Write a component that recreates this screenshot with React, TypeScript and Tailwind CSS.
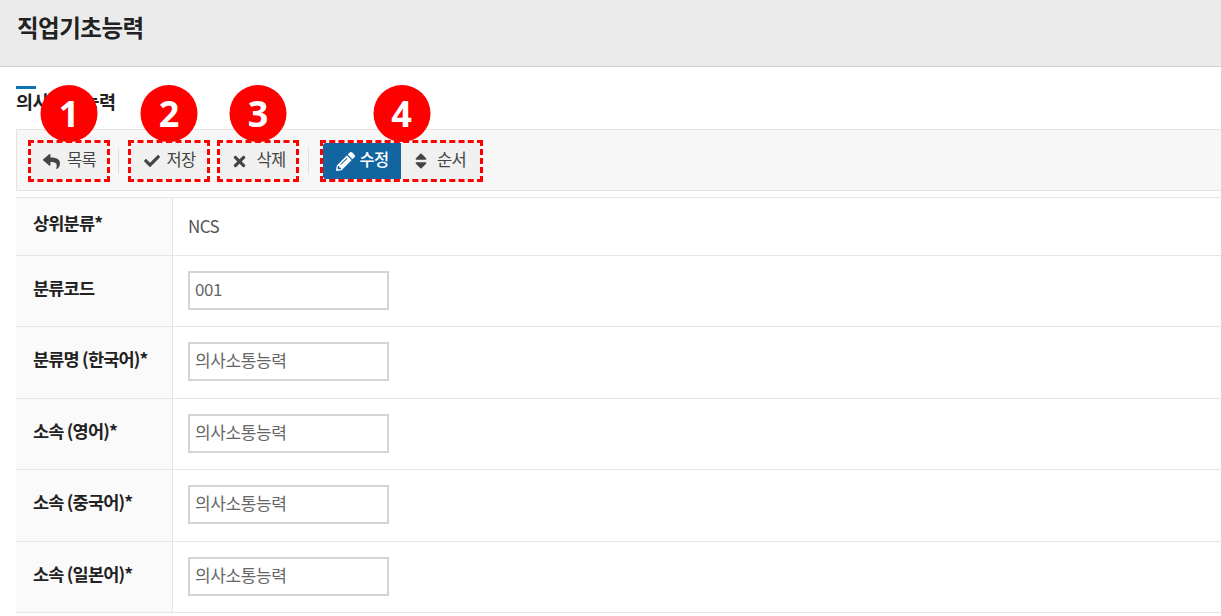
import { FaCheck, FaPencilAlt, FaReply, FaSort, FaTimes } from "react-icons/fa";
import type { ReactNode } from "react";

const rows = [
    { label: "상위분류*", text: "NCS", height: "h-[58px]" },
    { label: "분류코드", value: "001", height: "h-[71px]" },
    { label: "분류명 (한국어)*", value: "의사소통능력", height: "h-[72px]" },
    { label: "소속 (영어)*", value: "의사소통능력", height: "h-[71px]" },
    { label: "소속 (중국어)*", value: "의사소통능력", height: "h-[72px]" },
    { label: "소속 (일본어)*", value: "의사소통능력", height: "h-[71px]" },
];

function Badge({ n }: { n: number }) {
    return (
        <span className="absolute -top-[58px] left-1/2 flex h-[57px] w-[57px] -translate-x-1/2 items-center justify-center rounded-full bg-[#ff0000] font-['Open_Sans',sans-serif] text-[36px] font-bold leading-none text-white">
            {n}
        </span>
    );
}

function Marked({ n, children }: { n: number; children: ReactNode }) {
    return (
        <div className="relative flex border-[3px] border-dashed border-[#ff0000]">
            <Badge n={n} />
            {children}
        </div>
    );
}

function ToolButton({ icon, label, gap }: { icon: ReactNode; label: string; gap: string }) {
    return (
        <button className={`flex h-[36px] w-[76px] items-center justify-center rounded-[3px] bg-[#f0f0f0] pb-[3px] text-[16.5px] tracking-[-0.7px] text-[#444] ${gap}`}>
            {icon}
            {label}
        </button>
    );
}

export default function App() {
    return (
        <div className="h-[616px] w-[1221px] overflow-hidden bg-white font-['Noto_Sans_CJK_KR','Liberation_Sans',sans-serif] text-[#333]">
            <header className="flex h-[67px] items-center border-b border-[#cfcfcf] bg-[#ebebeb] pb-[11px] pl-[17px]">
                <h1 className="text-[23.5px] font-bold tracking-[-0.5px] text-[#222]">직업기초능력</h1>
            </header>

            <div className="pl-4">
                <div className="mt-[19px] h-[3px] w-5 bg-[#0f6fb5]" />
                <h2 className="h-[40px] text-[18.5px] font-bold leading-[24px] tracking-[-0.4px] text-[#222]">
                    의사소통능력
                </h2>

                <div className="flex h-[62px] items-center border-y border-l border-[#e4e4e4] bg-[#f7f7f7] pl-[11px] pt-[2px]">
                    <Marked n={1}>
                        <ToolButton gap="gap-[6px]" icon={<FaReply className="mt-[3px] h-[17px] w-[19px]" />} label="목록" />
                    </Marked>
                    <span className="ml-[8px] h-[26px] w-px bg-[#e0e0e0]" />
                    <div className="ml-[9px]">
                        <Marked n={2}>
                            <ToolButton gap="gap-[6px]" icon={<FaCheck className="mt-[3px] h-[16px] w-[18px]" />} label="저장" />
                        </Marked>
                    </div>
                    <div className="ml-[7px]">
                        <Marked n={3}>
                            <ToolButton gap="gap-[9px]" icon={<FaTimes className="mt-[3px] h-[17px] w-[17px]" />} label="삭제" />
                        </Marked>
                    </div>
                    <span className="ml-[9px] h-[26px] w-px bg-[#e0e0e0]" />
                    <div className="ml-[11px]">
                        <Marked n={4}>
                            <button className="flex h-[36px] w-[78px] items-center justify-center gap-[5px] rounded-l-[3px] bg-[#12659f] pb-[3px] text-[16.5px] font-medium tracking-[-0.7px] text-white">
                                <FaPencilAlt className="mt-[3px] h-[19px] w-[19px]" />
                                수정
                            </button>
                            <button className="flex h-[36px] w-[79px] items-center justify-center gap-[10px] rounded-r-[3px] bg-[#f0f0f0] pb-[3px] text-[16.5px] tracking-[-0.7px] text-[#444]">
                                <FaSort className="mt-[3px] h-[20px] w-[12px]" />
                                순서
                            </button>
                        </Marked>
                    </div>
                </div>

                <div className="mt-[6px] border-t border-[#e6e6e6]">
                    {rows.map((row) => (
                        <div key={row.label} className={`flex border-b border-[#e6e6e6] ${row.height}`}>
                            <div className="flex w-[157px] items-center border-r border-[#e6e6e6] bg-[#fafafa] pb-[6px] pl-[17px] text-[17.5px] font-bold tracking-[-0.8px] text-[#222]">
                                {row.label}
                            </div>
                            <div className="flex flex-1 items-center pb-[2px] pl-[15px]">
                                {row.text ? (
                                    <span className="text-[17px] tracking-[-0.6px] text-[#555]">{row.text}</span>
                                ) : (
                                    <input
                                        readOnly
                                        value={row.value}
                                        className="h-[39px] w-[201px] border-2 border-[#d4d4d4] bg-white px-[5px] pb-[4px] text-[17px] tracking-[-0.4px] text-[#666] outline-none"
                                    />
                                )}
                            </div>
                        </div>
                    ))}
                </div>
            </div>
        </div>
    );
}
